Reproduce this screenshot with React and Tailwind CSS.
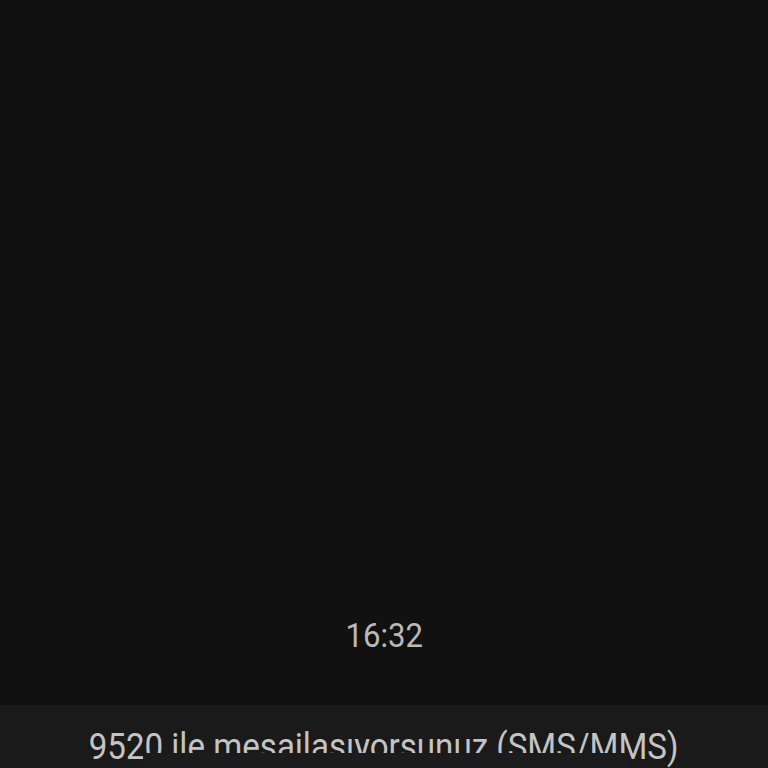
export default function App() {
  return (
    <div
      className="h-[768px] w-[768px] bg-[#111111] flex flex-col overflow-hidden"
      style={{ fontFamily: 'Roboto, "Noto Sans", sans-serif' }}
    >
      <div className="flex-1 flex items-end justify-center pb-[53px]">
        <span className="inline-block text-[34px] leading-none text-[#bababa] scale-x-[0.915]">16:32</span>
      </div>
      <div className="relative h-[63px] bg-[#1a1a1a] flex justify-center pt-[24px]">
        <span className="inline-block text-[36px] leading-none text-[#c4c4c4] whitespace-nowrap scale-x-[0.92]">
          9520 ile mesajlaşıyorsunuz (SMS/MMS)
        </span>
        <div className="absolute left-[143px] top-[48px] w-[484px] h-[20px] bg-[#1c1c1c]" />
      </div>
    </div>
  );
}
